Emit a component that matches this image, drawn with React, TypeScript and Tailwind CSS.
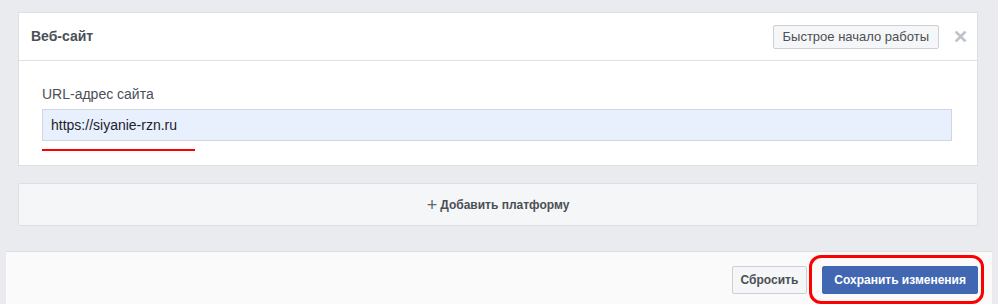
const App = () => {
  return (
    <div className="w-full h-[304px] bg-[#e9ebee] overflow-hidden font-['Liberation_Sans',Arial,sans-serif] text-[#1d2129]">
      <div className="pt-[12px] px-[18px] w-[996px]">
        {/* website platform card */}
        <div className="w-[960px] bg-white border border-[#dddfe2]">
          <div className="h-[48px] flex items-center justify-between pl-[12px] pr-[12px] border-b border-[#dddfe2]">
            <span className="text-[14px] font-bold text-[#4b4f56]">Веб-сайт</span>
            <div className="flex items-center gap-[14px]">
              <button className="h-[24px] px-[9px] ml-[2px] bg-[#f5f6f7] border border-[#ccd0d5] rounded-[2px] text-[13px] text-[#4b4f56]">
                Быстрое начало работы
              </button>
              <span className="text-[#bec2c9] text-[18px] font-bold leading-none w-[12px]">✕</span>
            </div>
          </div>
          <div className="pt-[24px] pb-[14px] pl-[23px] pr-[25px]">
            <div className="text-[14px] text-[#4b4f56] leading-[18px] mb-[6px]">URL-адрес сайта</div>
            <div className="h-[32px] bg-[#e8f0fe] border border-[#d0d6e0] flex items-center px-[8px] text-[14px] text-[#1d2129]">
              https://siyanie-rzn.ru
            </div>
            <div className="mt-[8px] h-[2px] w-[153px] bg-[#ff0000]"></div>
          </div>
        </div>

        {/* add platform */}
        <div className="mt-[17px] w-[960px] h-[43px] bg-[#f5f6f7] border border-[#dddfe2] rounded-[2px] flex items-center justify-center text-[12px] font-bold text-[#4b4f56]">
          <span className="text-[18px] font-normal leading-none mr-[3px] text-[#606770]">+</span>
          Добавить платформу
        </div>
      </div>

      {/* footer */}
      <div className="mt-[25px] ml-[6px] w-[986px] h-[60px] bg-[#fafafa] border-t border-[#dddfe2] flex items-start justify-end pr-[14px] pt-[14px]">
        <button className="h-[28px] px-[8px] bg-[#f5f6f7] border border-[#ccd0d5] rounded-[2px] text-[12px] font-bold text-[#4b4f56]">
          Сбросить
        </button>
        <div className="relative ml-[15px]">
          <button className="h-[28px] px-[11px] bg-[#4267b2] border border-[#4267b2] rounded-[2px] text-[12px] font-bold text-white">
            Сохранить изменения
          </button>
          <div className="absolute -left-[13px] -top-[11px] -right-[6px] -bottom-[10px] border-[3px] border-[#ff0000] rounded-[12px]"></div>
        </div>
      </div>
    </div>
  );
};

export default App;
